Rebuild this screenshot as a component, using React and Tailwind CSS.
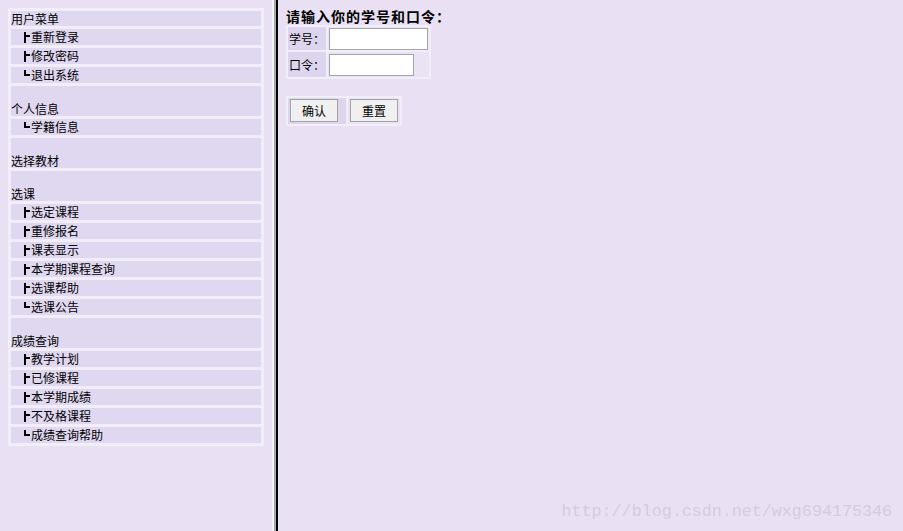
import React from "react";

// LEFT MENU DATA
const menu = [
  { title: "用户菜单", first: true, items: ["重新登录", "修改密码", "退出系统"] },
  { title: "个人信息", items: ["学籍信息"] },
  { title: "选择教材", items: [] },
  {
    title: "选课",
    items: ["选定课程", "重修报名", "课表显示", "本学期课程查询", "选课帮助", "选课公告"],
  },
  {
    title: "成绩查询",
    items: ["教学计划", "已修课程", "本学期成绩", "不及格课程", "成绩查询帮助"],
  },
];

// TREE LINE GLYPH (├ / └)
function TreeMark({ last }) {
  return (
    <svg width="7" height="16" viewBox="0 0 7 16" className="shrink-0">
      {last ? (
        <>
          <rect x="0" y="3" width="2" height="6" fill="#000" />
          <rect x="0" y="7" width="6" height="2" fill="#000" />
        </>
      ) : (
        <>
          <rect x="0" y="3" width="2" height="11" fill="#000" />
          <rect x="0" y="6" width="6" height="2" fill="#000" />
        </>
      )}
    </svg>
  );
}

function Menu() {
  return (
    <div className="w-[256px] bg-[#f1edf9] p-[3px] flex flex-col gap-[3px]">
      {menu.map((group) => (
        <React.Fragment key={group.title}>
          {/* GROUP TITLE */}
          {group.first ? (
            <div className="h-[15px] bg-[#e0d8f0] flex items-end leading-[14px]">
              {group.title}
            </div>
          ) : (
            <div className="h-[30px] bg-[#e0d8f0] flex items-end leading-[15px]">
              {group.title}
            </div>
          )}

          {/* SUB ITEMS */}
          {group.items.map((item, i) => (
            <div
              key={item}
              className="h-[16px] bg-[#e0d8f0] flex items-center leading-[16px]"
            >
              <span className="w-[13px] shrink-0" />
              <TreeMark last={i === group.items.length - 1} />
              <span>{item}</span>
            </div>
          ))}
        </React.Fragment>
      ))}
    </div>
  );
}

function LoginForm() {
  return (
    <div className="flex flex-col items-start">
      <h1 className="text-[14px] leading-[17px] font-bold tracking-[1px] whitespace-nowrap">
        请输入你的学号和口令：
      </h1>

      {/* ================= FORM TABLE ================= */}
      <div className="w-[145px] bg-[#f1edf9] p-[2px] flex flex-col gap-[2px]">
        <div className="h-[23px] flex gap-[2px]">
          <div className="w-[38px] bg-[#ddd5ee] flex items-center pl-[1px]">学号：</div>
          <div className="flex-1 bg-[#e9e3f5] pl-[1px] pt-[1px]">
            <input className="block w-[99px] h-[22px] bg-white border border-[#a6a6a6] outline-none" />
          </div>
        </div>
        <div className="h-[25px] flex gap-[2px]">
          <div className="w-[38px] bg-[#ddd5ee] flex items-center pl-[1px]">口令：</div>
          <div className="flex-1 bg-[#e9e3f5] pl-[1px] pt-[2px]">
            <input
              type="password"
              className="block w-[85px] h-[22px] bg-white border border-[#a6a6a6] outline-none"
            />
          </div>
        </div>
      </div>

      {/* ================= BUTTONS ================= */}
      <div className="mt-[17px] w-[116px] h-[30px] bg-[#f1edf9] p-[2px] flex gap-[2px]">
        <div className="w-[58px] bg-[#ddd5ee] pl-[2px] pt-[1px]">
          <button className="w-[48px] h-[23px] bg-[#f0f0f0] border border-[#a3a3a3] text-[12px] leading-none">
            确认
          </button>
        </div>
        <div className="flex-1 bg-[#e9e3f5] pl-[2px] pt-[1px]">
          <button className="w-[48px] h-[23px] bg-[#f0f0f0] border border-[#a3a3a3] text-[12px] leading-none">
            重置
          </button>
        </div>
      </div>
    </div>
  );
}

export default function App() {
  return (
    <div className="relative flex h-screen w-full overflow-hidden bg-[#e9e1f3] text-[12px] text-black font-['Noto_Sans_CJK_SC',sans-serif]">
      {/* LEFT FRAME */}
      <div className="w-[272px] shrink-0 p-[8px]">
        <Menu />
      </div>

      {/* FRAME BORDER */}
      <div className="w-[2px] shrink-0 bg-[#f4f4f4]" />
      <div className="w-[2px] shrink-0 bg-[#a8a8a8]" />
      <div className="w-[2px] shrink-0 bg-black" />

      {/* RIGHT FRAME */}
      <div className="flex-1 p-[8px]">
        <LoginForm />
      </div>

      {/* WATERMARK */}
      <div className="absolute right-[11px] bottom-[9px] text-[16.7px] leading-[20px] text-[#d3ccdf] font-['Liberation_Mono',monospace]">
        http://blog.csdn.net/wxg694175346
      </div>
    </div>
  );
}
